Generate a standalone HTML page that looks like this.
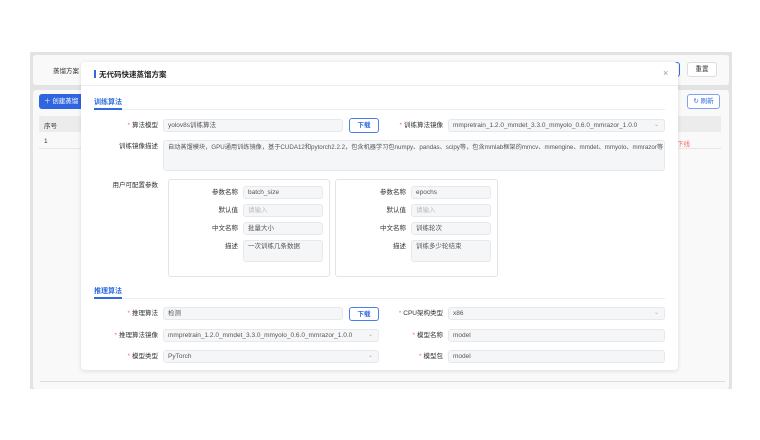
<!DOCTYPE html>
<html><head><meta charset="utf-8"><style>
*{box-sizing:border-box;margin:0;padding:0}
body{width:760px;height:440px;background:#fff;position:relative;overflow:hidden;font-family:"Liberation Sans","Noto Sans CJK SC",sans-serif;font-size:7px;color:#333}
.a{position:absolute}
.inp{position:absolute;background:#f5f6f8;border:1px solid #e6e8eb;border-radius:3px;font-size:6.5px;color:#555;padding:0 4px;line-height:11px}
.lbl{position:absolute;text-align:right;font-size:6.5px;color:#333;line-height:13px}
.lbl b{color:#f56c6c;font-weight:normal;margin-right:2px}
.btn{position:absolute;border:1px solid #4a7ee8;color:#2f6ae0;border-radius:3px;background:#fff;font-size:6.5px;text-align:center;line-height:13px;font-weight:bold}
.box{position:absolute;border:1px solid #e2e4e8;border-radius:3px;background:#fff}
.chev{position:absolute;right:5px;top:0;color:#aaa;font-size:6px}
</style></head><body>
<div class="a" style="left:30px;top:52px;width:702px;height:337px;background:#e3e3e3"></div>
<div class="a" style="left:33px;top:55px;width:696px;height:30px;background:#f9f9f9;border-radius:3px"></div>
<div class="a" style="left:53px;top:65px;font-size:6.5px">蒸馏方案</div>
<div class="a" style="left:648px;top:62px;width:32px;height:15px;border:1px solid #3a6fe0;border-radius:3px;background:#f9f9f9"></div>
<div class="a" style="left:687px;top:62px;width:30px;height:15px;border:1px solid #ddd;border-radius:3px;background:#fff;font-size:6.5px;text-align:center;line-height:13px">重置</div>
<div class="a" style="left:33px;top:90px;width:696px;height:299px;background:#f9f9f9;border-radius:3px"></div>
<div class="a" style="left:39px;top:94px;width:45px;height:15px;background:#2f66e0;border-radius:3px;color:#fff;font-size:6.5px;line-height:15px;padding-left:5px">＋ 创建蒸馏方</div>
<div class="a" style="left:687px;top:94px;width:33px;height:15px;border:1px solid #7fa3ec;border-radius:3px;background:#fff;color:#2f6ae0;font-size:6.5px;text-align:center;line-height:13px">↻ 刷新</div>
<div class="a" style="left:39px;top:116px;width:682px;height:16px;background:#ececec"></div>
<div class="a" style="left:44px;top:120px;font-size:6.5px">序号</div>
<div class="a" style="left:44px;top:138px;font-size:6.5px">1</div>
<div class="a" style="left:39px;top:148px;width:682px;height:1px;background:#e6e6e6"></div>
<div class="a" style="left:677px;top:138px;font-size:6.5px;color:#f56c6c">下线</div>
<div class="a" style="left:40px;top:381px;width:685px;height:1px;background:#ddd"></div>

<div class="a" style="left:81px;top:62px;width:597px;height:308px;background:#fff;border-radius:4px;box-shadow:0 1px 5px rgba(0,0,0,.12)"></div>
<div class="a" style="left:94px;top:70px;width:2px;height:8px;background:#2f6ae0"></div>
<div class="a" style="left:99px;top:69px;font-size:7.5px;font-weight:bold;color:#222">无代码快速蒸馏方案</div>
<div class="a" style="left:663px;top:68px;font-size:9px;color:#999">×</div>
<div class="a" style="left:81px;top:85px;width:597px;height:1px;background:#eee"></div>

<div class="a" style="left:94px;top:97px;font-size:7px;font-weight:bold;color:#2f6ae0">训练算法</div>
<div class="a" style="left:94px;top:109px;width:571px;height:1px;background:#eee"></div>
<div class="a" style="left:94px;top:108px;width:28px;height:2px;background:#2f6ae0"></div>

<div class="lbl" style="left:100px;top:119px;width:58px"><b>*</b>算法模型</div>
<div class="inp" style="left:163px;top:119px;width:180px;height:13px">yolov8s训练算法</div>
<div class="btn" style="left:349px;top:118px;width:30px;height:15px">下载</div>
<div class="lbl" style="left:380px;top:119px;width:63px"><b>*</b>训练算法镜像</div>
<div class="inp" style="left:448px;top:119px;width:217px;height:13px">mmpretrain_1.2.0_mmdet_3.3.0_mmyolo_0.6.0_mmrazor_1.0.0<span class="chev">⌄</span></div>

<div class="lbl" style="left:100px;top:140px;width:58px">训练镜像描述</div>
<div class="inp" style="left:163px;top:140px;width:502px;height:31px;line-height:12px;padding-top:1px;white-space:nowrap;overflow:hidden;font-size:6.2px">自动蒸馏模块，GPU通用训练镜像，基于CUDA12和pytorch2.2.2，包含机器学习包numpy、pandas、scipy等，包含mmlab框架的mmcv、mmengine、mmdet、mmyolo、mmrazor等</div>

<div class="lbl" style="left:100px;top:179px;width:58px">用户可配置参数</div>
<div class="box" style="left:168px;top:179px;width:162px;height:98px"></div>
<div class="box" style="left:335px;top:179px;width:163px;height:98px"></div>

<div class="lbl" style="left:180px;top:186px;width:58px">参数名称</div>
<div class="inp" style="left:243px;top:186px;width:80px;height:13px">batch_size</div>
<div class="lbl" style="left:180px;top:204px;width:58px">默认值</div>
<div class="inp" style="left:243px;top:204px;width:80px;height:13px;color:#bbb">请输入</div>
<div class="lbl" style="left:180px;top:222px;width:58px">中文名称</div>
<div class="inp" style="left:243px;top:222px;width:80px;height:13px">批量大小</div>
<div class="lbl" style="left:180px;top:240px;width:58px">描述</div>
<div class="inp" style="left:243px;top:240px;width:80px;height:22px">一次训练几条数据</div>

<div class="lbl" style="left:348px;top:186px;width:58px">参数名称</div>
<div class="inp" style="left:411px;top:186px;width:80px;height:13px">epochs</div>
<div class="lbl" style="left:348px;top:204px;width:58px">默认值</div>
<div class="inp" style="left:411px;top:204px;width:80px;height:13px;color:#bbb">请输入</div>
<div class="lbl" style="left:348px;top:222px;width:58px">中文名称</div>
<div class="inp" style="left:411px;top:222px;width:80px;height:13px">训练轮次</div>
<div class="lbl" style="left:348px;top:240px;width:58px">描述</div>
<div class="inp" style="left:411px;top:240px;width:80px;height:22px">训练多少轮结束</div>

<div class="a" style="left:94px;top:286px;font-size:7px;font-weight:bold;color:#2f6ae0">推理算法</div>
<div class="a" style="left:94px;top:298px;width:571px;height:1px;background:#eee"></div>
<div class="a" style="left:94px;top:297px;width:28px;height:2px;background:#2f6ae0"></div>

<div class="lbl" style="left:100px;top:307px;width:58px"><b>*</b>推理算法</div>
<div class="inp" style="left:163px;top:307px;width:180px;height:13px">检测</div>
<div class="btn" style="left:349px;top:307px;width:30px;height:14px">下载</div>
<div class="lbl" style="left:380px;top:307px;width:63px"><b>*</b>CPU架构类型</div>
<div class="inp" style="left:448px;top:307px;width:217px;height:13px">x86<span class="chev">⌄</span></div>

<div class="lbl" style="left:100px;top:329px;width:58px"><b>*</b>推理算法镜像</div>
<div class="inp" style="left:163px;top:329px;width:216px;height:13px">mmpretrain_1.2.0_mmdet_3.3.0_mmyolo_0.6.0_mmrazor_1.0.0<span class="chev">⌄</span></div>
<div class="lbl" style="left:380px;top:329px;width:63px"><b>*</b>模型名称</div>
<div class="inp" style="left:448px;top:329px;width:217px;height:13px">model</div>

<div class="lbl" style="left:100px;top:350px;width:58px"><b>*</b>模型类型</div>
<div class="inp" style="left:163px;top:350px;width:216px;height:13px">PyTorch<span class="chev">⌄</span></div>
<div class="lbl" style="left:380px;top:350px;width:63px"><b>*</b>模型包</div>
<div class="inp" style="left:448px;top:350px;width:217px;height:13px">model</div>
</body></html>
